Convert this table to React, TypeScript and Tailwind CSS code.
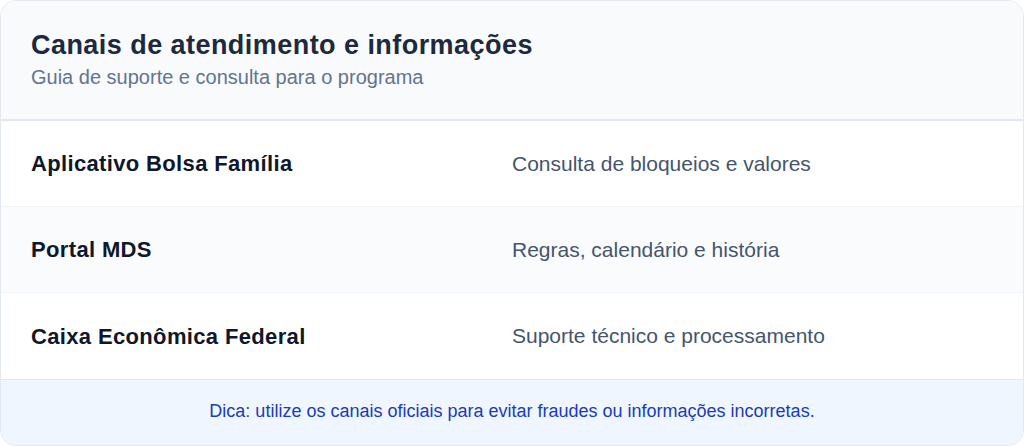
const rows = [
  { name: "Aplicativo Bolsa Família", desc: "Consulta de bloqueios e valores" },
  { name: "Portal MDS", desc: "Regras, calendário e história" },
  { name: "Caixa Econômica Federal", desc: "Suporte técnico e processamento" },
];

export default function App() {
  return (
    <div
      className="h-[446px] w-[1024px] bg-white"
      style={{ fontFamily: '"Liberation Sans", Arial, sans-serif' }}
    >
      <div className="flex h-full flex-col overflow-hidden rounded-2xl border border-slate-200 bg-white">
        {/* Header */}
        <div className="h-[120px] shrink-0 border-b-2 border-slate-200 bg-slate-50 px-[30px] pt-[27px]">
          <h1 className="text-[27px] font-bold leading-[34px] tracking-[0.45px] text-slate-800">
            Canais de atendimento e informações
          </h1>
          <p className="text-[20px] leading-[30px] text-slate-500">
            Guia de suporte e consulta para o programa
          </p>
        </div>

        {/* Rows */}
        {rows.map((r, i) => (
          <div
            key={i}
            className={`grid h-[86px] shrink-0 grid-cols-2 items-center px-[30px] ${
              i < rows.length - 1 ? "border-b border-slate-100" : ""
            } ${i % 2 === 1 ? "bg-slate-50/70" : "bg-white"}`}
          >
            <div className="text-[22px] font-bold tracking-[0.35px] text-slate-900">{r.name}</div>
            <div className="text-[21px] text-slate-600">{r.desc}</div>
          </div>
        ))}

        {/* Footer */}
        <div className="flex flex-1 items-center justify-center border-t border-slate-200 bg-blue-50 pb-[2px] text-[18px] text-blue-800">
          Dica: utilize os canais oficiais para evitar fraudes ou informações incorretas.
        </div>
      </div>
    </div>
  );
}
